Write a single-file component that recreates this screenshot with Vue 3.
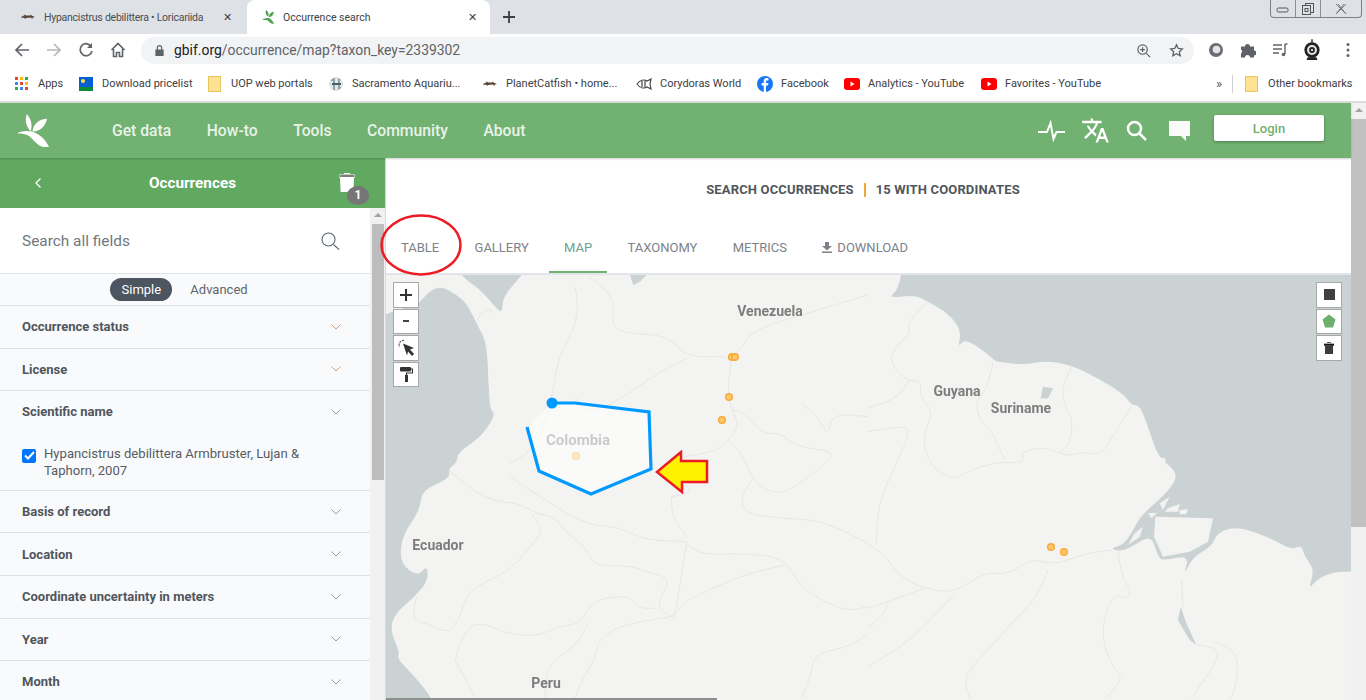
<template>
  <div class="page">
    <!-- Browser chrome -->
    <div class="tabstrip">
      <div class="tab">
        <svg class="fav" viewBox="0 0 16 16"><path d="M1 8l3-1.500 1-1 1 1 4 0 1-1 .5 1 3.500 1.500-2 .5-1 1.500-1-1.500-5 .5-1 1-1-1.500-2 .5z" fill="#5a4636"/></svg>
        <span class="tab-title squeeze">Hypancistrus debilittera • Loricariida</span>
        <span class="tab-x">✕</span>
      </div>
      <div class="tab active">
        <svg class="fav" viewBox="0 0 16 16"><path d="M5 1c-1 3 0 5 2 7 1-2 1-5-2-7zM13 3c-3 0-5 2-5 5 3 0 4-2 5-5zM1 11c3-2 5-2 7-2 2 1 4 3 5 6-4 0-5-3-7-4-2 0-3 0-5 0z" fill="#4fa04f"/></svg>
        <span class="tab-title">Occurrence search</span>
        <span class="tab-x">✕</span>
      </div>
      <svg class="newtab" viewBox="0 0 14 14"><path d="M7 1v12M1 7h12" stroke="#3c4043" stroke-width="1.800"/></svg>
      <div class="winbtns">
        <span class="win"><svg width="14" height="10" viewBox="0 0 14 10"><rect x="1" y="4" width="11" height="4" rx="1.500" fill="none" stroke="#555"/></svg></span>
        <span class="win"><svg width="14" height="14" viewBox="0 0 14 14" fill="none" stroke="#555"><rect x="4.500" y="1.500" width="8" height="9"/><rect x="1.500" y="3.500" width="8" height="9" fill="#dee1e6"/><rect x="4" y="6.500" width="3" height="3"/></svg></span>
        <span class="win wide"><svg width="14" height="12" viewBox="0 0 14 12" fill="none" stroke="#777"><path d="M2 1l10 10M12 1L2 11M4 1l8 10M10 1L2 11"/></svg></span>
      </div>
    </div>
    <div class="toolbar">
      <svg class="tb" viewBox="0 0 16 16" fill="none" stroke="#5f6368" stroke-width="1.700"><path d="M15 8H2M8 2L2 8l6 6"/></svg>
      <svg class="tb" viewBox="0 0 16 16" fill="none" stroke="#b4b7bb" stroke-width="1.700"><path d="M1 8h13M8 2l6 6-6 6"/></svg>
      <svg class="tb" viewBox="0 0 16 16" fill="none" stroke="#5f6368" stroke-width="1.700"><path d="M13.500 5A6 6 0 1 0 14 9"/><path d="M14 1v5H9" fill="#5f6368" stroke="none"/></svg>
      <svg class="tb" viewBox="0 0 16 16" fill="none" stroke="#5f6368" stroke-width="1.600"><path d="M1.500 8L8 1.500 14.500 8M3.500 7v7.500h3v-4h3v4h3V7"/></svg>
      <div class="omnibox">
        <svg class="lock" viewBox="0 0 12 14"><path d="M3 6V4a3 3 0 0 1 6 0v2h1.500v7h-9V6zM4.300 6h3.400V4a1.700 1.700 0 0 0-3.400 0z" fill="#5f6368"/></svg>
        <span class="url"><b>gbif.org</b>/occurrence/map?taxon_key=2339302</span>
        <svg class="omni-ic zoomic" viewBox="0 0 16 16" fill="none" stroke="#5f6368" stroke-width="1.300"><circle cx="7" cy="7" r="5"/><path d="M11 11l4 4M7 4.500v5M4.500 7h5"/></svg>
        <svg class="omni-ic" viewBox="0 0 16 16" fill="none" stroke="#5f6368" stroke-width="1.400"><path d="M8 1.800l1.900 4 4.300.5-3.200 3 .9 4.300L8 11.400l-3.900 2.200.9-4.300-3.200-3 4.300-.5z"/></svg>
      </div>
      <svg class="ext e1" viewBox="0 0 16 16"><circle cx="8" cy="8" r="7" fill="#6b6f73"/><circle cx="8.500" cy="7.500" r="3.800" fill="#e4e5e6"/></svg>
      <svg class="ext" viewBox="0 0 16 16"><path d="M1 4.500h4a2.500 2.500 0 0 1 5 0h4v4a2.500 2.500 0 0 1 0 5v2H10a2.500 2.500 0 0 0-5 0H1v-4a2.500 2.500 0 0 0 0-4z" fill="#5f6368"/></svg>
      <svg class="ext" viewBox="0 0 16 16" fill="none" stroke="#5f6368" stroke-width="1.400"><path d="M1 3h9M1 7h9M1 11h6M13 2v10"/><path d="M13 2h2.500"/><circle cx="11.500" cy="12.500" r="1.800" fill="#5f6368" stroke="none"/></svg>
      <svg class="ext avatar" viewBox="0 0 20 24"><path d="M10 0v4" stroke="#222" stroke-width="1.500"/><circle cx="10" cy="12" r="8.500" fill="#222"/><circle cx="10" cy="12" r="5.500" fill="#e8e8e8"/><circle cx="10" cy="12" r="3.200" fill="#222"/><circle cx="10" cy="12" r="1.200" fill="#fff"/><path d="M5 20l-1 3h12l-1-3z" fill="#222"/></svg>
      <svg class="ext dots" viewBox="0 0 4 16"><circle cx="2" cy="2.500" r="1.500" fill="#5f6368"/><circle cx="2" cy="8" r="1.500" fill="#5f6368"/><circle cx="2" cy="13.500" r="1.500" fill="#5f6368"/></svg>
    </div>
    <div class="bookmarks">
      <div v-for="b in bookmarks" :key="b.label" class="bm" :style="{ width: b.w + 'px' }">
        <svg v-if="b.icon === 'apps'" class="bm-ic small" viewBox="0 0 13 13">
          <rect v-for="(c, i) in appColors" :key="i" :x="(i % 3) * 5" :y="Math.floor(i / 3) * 5" width="3" height="3" :fill="c" />
        </svg>
        <svg v-else-if="b.icon === 'flag'" class="bm-ic" viewBox="0 0 16 16"><rect x="1" y="1" width="14" height="14" fill="#0a5fd6"/><rect x="1" y="11" width="14" height="4" fill="#0c8a3a"/><circle cx="5" cy="5" r="2" fill="#ffe23c"/></svg>
        <svg v-else-if="b.icon === 'folder'" class="bm-ic folder" viewBox="0 0 13 16"><path d="M.5.5h12v15H.5z" fill="#fde293" stroke="#e8c65c"/></svg>
        <svg v-else-if="b.icon === 'globe'" class="bm-ic" viewBox="0 0 16 16"><circle cx="8" cy="8" r="6.500" fill="#8fa3a8"/><path d="M2 5h3v8H2zM7 2h3v12H7zM12 4h2v7h-2z" fill="#dfe7e7"/><path d="M4 8h9" stroke="#46606a" stroke-width="2"/></svg>
        <svg v-else-if="b.icon === 'fish'" class="bm-ic" viewBox="0 0 16 16"><path d="M1 8l3-1.500 1-1 1 1 4 0 1-1 .5 1 3.500 1.500-2 .5-1 1.500-1-1.500-5 .5-1 1-1-1.500-2 .5z" fill="#5a4636"/></svg>
        <svg v-else-if="b.icon === 'cory'" class="bm-ic" viewBox="0 0 16 16" fill="none" stroke="#444" stroke-width="1.200"><path d="M1 8c3-4 7-5 10-3l4-2-1 5 1 5-4-2c-3 2-7 1-10-3zM6 5v6M9 5v6"/></svg>
        <svg v-else-if="b.icon === 'fb'" class="bm-ic" viewBox="0 0 16 16"><circle cx="8" cy="8" r="8" fill="#1877f2"/><path d="M9 16V9.500h2l.4-2.400H9V5.600c0-.7.300-1.200 1.300-1.200h1.200V2.300c-.5-.1-1.200-.2-1.900-.2C8 2.100 6.700 3.300 6.700 5.400v1.700H4.600v2.400h2.100V16z" fill="#fff"/></svg>
        <svg v-else class="bm-ic" viewBox="0 0 16 16"><rect y="2" width="16" height="12" rx="3" fill="#f00"/><path d="M6.500 5.500v5l4-2.500z" fill="#fff"/></svg>
        <span class="bm-label">{{ b.label }}</span>
      </div>
      <span class="bm-more">»</span>
      <span class="bm-sep"></span>
      <svg class="bm-ic folder" viewBox="0 0 13 16"><path d="M.5.5h12v15H.5z" fill="#fde293" stroke="#e8c65c"/></svg>
      <span class="bm-label other">Other bookmarks</span>
    </div>

    <!-- Site -->
    <div class="site">
      <div class="site-main">
        <header class="topbar">
          <svg class="logo" viewBox="0 0 34 34"><path d="M10 0c-2 7-1 12 4 18 2-6 1-13-4-18zM31 5c-8 0-14 5-15 13 8 0 13-5 15-13zM0 20c5-3 10-3 15-2 7 2 14 7 18 16-5 1-10-1-14-5-3-3-6-7-10-8-3-1-6-1-9-1z" fill="#fff"/></svg>
          <nav class="mainnav">
            <a v-for="n in navItems" :key="n">{{ n }}</a>
          </nav>
          <div class="top-right">
            <svg class="ti pulse" viewBox="0 0 27 20" fill="none" stroke="#fff" stroke-width="2"><path d="M0 11h9l3.500-9 3 16 3-7h8.500"/></svg>
            <svg class="ti lang" viewBox="0 0 24 24" fill="#fff"><path d="M12.900 15.100l-2.600-2.500c1.800-2 3-4.200 3.800-6.600H17V4h-7V2H8v2H1v2h11.200c-.7 1.900-1.700 3.700-3.200 5.400-.9-1-1.700-2.200-2.300-3.400h-2c.7 1.600 1.700 3.200 3 4.600l-5.100 5L4 19l5-5 3.100 3.100zM18.500 10h-2L12 22h2l1.100-3h4.800l1.100 3h2zm-2.600 7l1.600-4.300 1.600 4.300z"/></svg>
            <svg class="ti srch" viewBox="0 0 21 21" fill="none" stroke="#fff" stroke-width="2.500"><circle cx="8.500" cy="8.500" r="6.500"/><path d="M13.500 13.500l6.500 6.500"/></svg>
            <svg class="ti chat" viewBox="0 0 21 20"><path d="M0 0h21v15h-4v5l-5-5H0z" fill="#fafafa"/></svg>
            <button class="login">Login</button>
          </div>
        </header>

        <div class="content">
          <aside class="sidebar">
            <div class="side-head">
              <span class="back">
                <svg width="8" height="12" viewBox="0 0 8 12" fill="none" stroke="#fff" stroke-width="1.300"><path d="M6.500 1.500L2 6l4.500 4.500"/></svg>
              </span>
              <span class="side-title">Occurrences</span>
              <span class="bin">
                <svg width="16" height="20" viewBox="0 0 16 20"><path d="M5 1.500h6M0 3h16v2H0z" stroke="#fff"/><path d="M1 5h14l-.6 15H1.600z" fill="#fff"/></svg>
                <span class="badge">1</span>
              </span>
            </div>
            <div class="side-scroll">
              <div class="side-body">
                <div class="search-row">
                  <span class="search-ph">Search all fields</span>
                  <svg width="19" height="18" viewBox="0 0 19 18" fill="none" stroke="#5d6670" stroke-width="1.100"><circle cx="7.500" cy="7.500" r="6.500"/><path d="M12.500 12.500l5.500 5"/></svg>
                </div>
                <div class="mode-row">
                  <span class="pill">Simple</span>
                  <span class="mode-alt">Advanced</span>
                </div>
                <div v-for="f in filters" :key="f.name" class="filter" :class="{ open: f.value }">
                  <div class="filter-head">
                    <span class="filter-name">{{ f.name }}</span>
                    <svg class="chev" :class="{ warm: f.warm }" viewBox="0 0 10 6" fill="none" stroke="currentColor"><path d="M.5.500L5 5 9.500.5"/></svg>
                  </div>
                  <label v-if="f.value" class="check">
                    <span class="box">
                      <svg width="11" height="9" viewBox="0 0 11 9" fill="none" stroke="#fff" stroke-width="2"><path d="M1 4.500l3 3 6-6.500"/></svg>
                    </span>
                    <span>{{ f.value }}</span>
                  </label>
                </div>
              </div>
              <div class="v-bar">
                <span class="arrow"></span>
                <span class="v-thumb"></span>
              </div>
            </div>
          </aside>

          <main class="main">
            <div class="summary">
              <span>SEARCH OCCURRENCES</span><span class="summary-sep"></span><span>15 WITH COORDINATES</span>
            </div>
            <div class="tabs">
              <a v-for="t in tabs" :key="t" class="tab-link" :class="{ on: t === 'MAP' }">
                <svg v-if="t === 'DOWNLOAD'" width="10" height="11" viewBox="0 0 10 11"><path d="M3 0h4v4h3L5 8.500 0 4h3zM0 9.500h10V11H0z" fill="#7d8288"/></svg>
                {{ t }}
              </a>
            </div>
            <div class="map">
              <svg class="map-svg" viewBox="386 275 965 425">
                <rect x="386" y="274" width="965" height="426" fill="#f3f3f1" />
                <g transform="translate(385,270) scale(.33333)">
                  <path fill="#cad2d3" :d="seaLeft" />
                  <path fill="#cad2d3" d="M735 15H785L765 35 745 45z" />
                  <path v-for="(d, i) in bordersLeft" :key="i" :d="d" class="border-line" />
                </g>
                <g transform="translate(868,270) scale(.33333)">
                  <path fill="#cad2d3" :d="seaRight" />
                  <path fill="#f3f3f1" d="M862 740 1035 745 1020 815 965 845 885 860 858 800zM800 790 825 770 815 800 780 825zM875 700 905 680 885 720zM900 715 935 702 930 725 890 725zM840 730 868 728 850 745zM935 720 960 718 955 732 935 733z" />
                  <path fill="#cad2d3" d="M525 350 555 355 540 385 518 385zM938 1010 955 1060 985 1125 965 1110 930 1050z" />
                  <circle cx="885" cy="571" r="8" fill="#f3f3f1" />
                  <path v-for="(d, i) in bordersRight" :key="i" :d="d" class="border-line" />
                </g>
                <g class="map-label">
                  <text x="770" y="316">Venezuela</text>
                  <text x="957" y="396">Guyana</text>
                  <text x="1021" y="413">Suriname</text>
                  <text x="438" y="550">Ecuador</text>
                  <text x="546" y="688">Peru</text>
                  <text x="578" y="445" class="big">Colombia</text>
                </g>
                <circle v-for="(p, i) in points" :key="i" :cx="p[0]" :cy="p[1]" r="3.300" class="point" />
                <!-- polygon being drawn -->
                <path d="M552 403 575 403 649 412 651 469 591 494 539 471 527 427z" fill="#fff" fill-opacity=".6" />
                <path d="M552 403 575 403 649 412 651 469 591 494 539 471 527 427" fill="none" stroke="#0099ff" stroke-width="3.200" />
                <circle cx="552" cy="403" r="5.500" fill="#0099ff" />
              </svg>

              <div class="ctrls left">
                <button class="ctrl"><svg width="14" height="14" viewBox="0 0 14 14"><path d="M7 1v12M1 7h12" stroke="#333" stroke-width="2"/></svg></button>
                <button class="ctrl"><svg width="8" height="4" viewBox="0 0 8 4"><path d="M1 2h6" stroke="#444" stroke-width="2"/></svg></button>
                <button class="ctrl"><svg width="18" height="18" viewBox="0 0 18 18"><path d="M6 4.500l11 4.500-4 1.500 4 4.500-2 2-4-4.500-1 4z" fill="#333"/><path d="M7 1.500A4.500 4.500 0 0 0 2.500 8" fill="none" stroke="#555" stroke-width="1.200" stroke-dasharray="2 1"/></svg></button>
                <button class="ctrl"><svg width="13" height="15" viewBox="0 0 13 15"><rect x="0" y="0" width="11" height="4.500" rx="1" fill="#333"/><path d="M11 2h1.500v4H6.500v3" fill="none" stroke="#333" stroke-width="1.200"/><rect x="5" y="8" width="3" height="7" fill="#333"/></svg></button>
              </div>
              <div class="ctrls right">
                <button class="ctrl"><span class="sq"></span></button>
                <button class="ctrl"><svg width="14" height="14" viewBox="0 0 14 14"><path d="M7 .5l6.500 5-2.500 8H3l-2.500-8z" fill="#6db06d"/></svg></button>
                <button class="ctrl"><svg width="10" height="12" viewBox="0 0 10 12"><path d="M3 .5h4M0 2h10v1.500H0z" stroke="#333" stroke-width=".8"/><path d="M1 4h8v8H1z" fill="#3c3c3c"/></svg></button>
              </div>
              <div class="h-thumb"></div>
            </div>
          </main>
        </div>
      </div>
      <div class="page-bar">
        <span class="arrow"></span>
        <span class="page-thumb"></span>
      </div>
    </div>

    <!-- Annotations drawn on the screenshot -->
    <svg class="note circle-note" viewBox="0 0 84 64"><ellipse cx="41" cy="32" rx="39.500" ry="29.500" fill="none" stroke="#ed1c24" stroke-width="2.500"/></svg>
    <svg class="note arrow-note" viewBox="0 0 54 44"><path d="M2 22 26 2V11H52V32H27V42z" fill="#fff200" stroke="#ed1c24" stroke-width="2.500"/></svg>
  </div>
</template>

<script setup>
const bookmarks = [
  { label: 'Apps', icon: 'apps', w: 63 },
  { label: 'Download pricelist', icon: 'flag', w: 130 },
  { label: 'UOP web portals', icon: 'folder', w: 120 },
  { label: 'Sacramento Aquariu...', icon: 'globe', w: 154 },
  { label: 'PlanetCatfish • home...', icon: 'fish', w: 154 },
  { label: 'Corydoras World', icon: 'cory', w: 121 },
  { label: 'Facebook', icon: 'fb', w: 87 },
  { label: 'Analytics - YouTube', icon: 'yt', w: 137 },
  { label: 'Favorites - YouTube', icon: 'yt', w: 137 },
]

const appColors = ['#ea4335', '#fbbc05', '#34a853', '#4285f4', '#ea4335', '#fbbc05', '#34a853', '#4285f4', '#ea4335']

const navItems = ['Get data', 'How-to', 'Tools', 'Community', 'About']

const tabs = ['TABLE', 'GALLERY', 'MAP', 'TAXONOMY', 'METRICS', 'DOWNLOAD']

const filters = [
  { name: 'Occurrence status', warm: true },
  { name: 'License', warm: true },
  { name: 'Scientific name', value: 'Hypancistrus debilittera Armbruster, Lujan & Taphorn, 2007' },
  { name: 'Basis of record' },
  { name: 'Location' },
  { name: 'Coordinate uncertainty in meters' },
  { name: 'Year' },
  { name: 'Month' },
]

const points = [
  [732, 357], [735, 357], [729, 397], [722, 420], [576, 456], [1051, 547], [1064, 552],
]

// rounds the corners of a traced polyline: "x y x y ..." becomes quadratic curves
function smooth(line, closed) {
  const n = line.trim().split(/\s+/).map(Number)
  const pts = []
  for (let i = 0; i < n.length; i += 2) pts.push([n[i], n[i + 1]])
  let d = `M${pts[0][0]} ${pts[0][1]}`
  for (let i = 1; i < pts.length - 1; i++) {
    const mx = (pts[i][0] + pts[i + 1][0]) / 2
    const my = (pts[i][1] + pts[i + 1][1]) / 2
    d += `Q${pts[i][0]} ${pts[i][1]} ${mx} ${my}`
  }
  const last = pts[pts.length - 1]
  d += `L${last[0]} ${last[1]}`
  return closed ? d + 'z' : d
}

// map coastlines and borders, traced at 3x from the left and right half of the map
const seaLeft = [
  smooth('215 -20 225 18 285 57 336 117 351 128 354 81 405 21 440 -20', true),
  smooth('-40 150 30 120 100 105 130 65 170 48 215 75 245 100 280 170 305 220 310 330 315 420 332 432 290 500 220 545 215 580 190 595 195 625 110 660 105 720 50 800 45 880 100 920 125 885 130 930 90 980 30 1030 15 1080 45 1150 35 1165 90 1220 145 1290 150 1340 -40 1340', true),
].join('')
const seaRight = smooth('105 -20 95 55 60 85 140 75 180 95 240 130 280 180 270 235 290 205 350 245 378 270 385 275 470 285 530 272 610 285 700 330 770 375 790 405 815 405 840 470 870 560 920 600 925 630 885 680 820 735 790 790 765 825 725 835 760 845 800 825 850 795 870 860 885 872 965 855 945 920 975 860 1030 830 1050 785 1110 770 1200 800 1270 840 1300 825 1310 860 1340 900 1320 960 1350 925 1400 905 1449 905 1520 905 1520 -20', true)

const bordersLeft = [
  '610 20 660 50 690 110 680 160 710 190 850 195 905 265 1045 255 1030 320 1030 400 1065 465 1030 510 990 545 900 560 860 570',
  '905 265 850 290 760 350 700 390 640 420 590 415 570 380',
  '570 50 580 100 570 170 520 260 500 390 470 490 430 550 375 580',
  '375 620 420 650 510 710 610 765 700 770 780 810 905 815',
  '190 600 260 660 330 695 400 700 450 730 510 740 545 790 600 830 630 890 730 885 800 910 860 925 810 1010 860 1040',
  '440 730 470 770 460 800 380 900 270 950 240 990 220 1050 190 1090 140 1065 80 1050 95 980',
  '860 1040 790 1050 700 1070 640 1110 630 1170 590 1230 570 1285',
  '905 815 870 1045 860 1040',
  '905 820 940 855 1050 850 1200 860 1250 960 1380 1025 1449 1010',
  '860 680 855 730 905 800',
  '860 680 925 670 900 640 890 660',
  '1030 510 1075 550 1100 630 1150 665 1200 670 1300 600 1360 545 1230 530 1190 490 1130 490 1080 430 1040 420',
  '1100 630 1065 680 1080 730 1180 745 1310 750 1449 820',
  '1250 400 1300 440 1330 500 1340 430 1449 440',
  '1449 75 1300 120 1100 180 1075 230 1045 255',
  '910 990 860 1040',
  '910 990 1050 920 1200 885',
  '210 1170 240 1070 300 1060 360 1090 450 1100 520 1070 590 1060 620 990 730 975 760 1015 810 1015',
  '210 1170 270 1285',
  '480 1285 475 1190 570 1130 610 1060',
  '1449 1090 1400 1130 1290 1150 1280 1210 1250 1285',
  '270 160 300 110 330 130',
].map((l) => smooth(l))

const bordersRight = [
  '180 95 115 155 130 190 80 230 65 280 120 335 160 330 155 380 195 425 175 470 165 520 190 590 250 630 300 605 380 575 470 580 460 545 530 530 600 560 640 545 700 555 740 490 790 410',
  '120 335 100 380 0 415',
  '375 275 365 340 320 400 340 460 370 480 410 570',
  '610 290 580 350 590 410 615 450 605 520 575 550',
  '0 485 110 465 125 490 90 570 30 700 25 820',
  '0 825 40 840 100 925 170 955 260 970 350 905 420 915 490 865 560 885 650 850 730 840',
  '170 955 60 995 0 1015',
  '60 1000 50 1030 0 1075',
  '260 970 180 1060 100 1130 0 1190',
  '540 900 510 980 430 1060 350 1150 285 1220 305 1285',
  '750 845 760 920 790 960 775 990 750 970 715 1010 700 1110 740 1200 765 1225 715 1285',
  '940 930 945 1010',
  '990 1125 1045 1130 1050 1170 970 1285',
  '1040 1115 1105 1135 1110 1220 1090 1285',
].map((l) => smooth(l))
</script>

<style>
html, body {
  margin: 0;
  overflow: hidden;
}
</style>

<style scoped>
.page {
  position: relative;
  width: 1366px;
  height: 700px;
  overflow: hidden;
  display: flex;
  flex-direction: column;
  font-family: Roboto, "Liberation Sans", sans-serif;
  background: #fff;
}

/* Browser tab strip */
.tabstrip {
  height: 34px;
  flex: none;
  display: flex;
  background: #dee1e6;
  position: relative;
}
.tab {
  width: 240px;
  padding: 0 8px 0 20px;
  display: flex;
  align-items: center;
  box-sizing: border-box;
  font-size: 10.500px;
  color: #4a4d51;
}
.tab.active {
  width: 243px;
  margin-left: 7px;
  padding: 0 13px 0 14px;
  background: #fff;
  border-radius: 8px 8px 0 0;
  color: #3c4043;
}
.fav {
  width: 16px;
  height: 16px;
  margin-right: 8px;
  flex: none;
}
.active .fav {
  margin-right: 6px;
}
.tab-title {
  flex: 1;
  white-space: nowrap;
}
.squeeze {
  letter-spacing: -.25px;
}
.tab-x {
  font-size: 11px;
  color: #3c4043;
}
.newtab {
  width: 14px;
  height: 14px;
  margin: 10px 0 0 12px;
}
.winbtns {
  position: absolute;
  top: 0;
  right: 4px;
  display: flex;
  height: 17px;
  border: 1px solid #7c7f83;
  border-top: none;
  border-radius: 0 0 4px 4px;
}
.win {
  width: 24px;
  display: flex;
  align-items: center;
  justify-content: center;
  border-right: 1px solid #8b8e92;
}
.win.wide {
  width: 40px;
  border-right: none;
}

/* Browser toolbar */
.toolbar {
  height: 32px;
  flex: none;
  display: flex;
  align-items: center;
  padding-left: 14px;
  box-sizing: border-box;
}
.tb {
  width: 16px;
  height: 16px;
  margin-right: 16px;
  flex: none;
}
.omnibox {
  width: 1053px;
  height: 27px;
  margin: 0 0 0 -1px;
  flex: none;
  display: flex;
  align-items: center;
  border-radius: 14px;
  background: #f1f3f4;
  padding: 0 10px 0 13px;
  box-sizing: border-box;
}
.lock {
  width: 11px;
  height: 13px;
  margin-right: 9px;
}
.url {
  flex: 1;
  font-size: 13.900px;
  color: #5f6368;
}
.url b {
  font-weight: 400;
  color: #202124;
}
.omni-ic {
  width: 15px;
  height: 15px;
}
.zoomic {
  margin-right: 18px;
}
.ext {
  width: 16px;
  height: 16px;
  margin-left: 16px;
  flex: none;
}
.e1 {
  margin-left: 14px;
}
.avatar {
  width: 18px;
  height: 22px;
  margin-left: 15px;
}
.dots {
  width: 4px;
  height: 16px;
  margin-left: 25px;
}

/* Bookmarks */
.bookmarks {
  height: 37px;
  flex: none;
  display: flex;
  align-items: center;
  padding: 0 0 0 15px;
  box-sizing: border-box;
  font-size: 11px;
  color: #3c4043;
  border-bottom: 2px solid #dcdcdc;
}
.bm {
  display: flex;
  align-items: center;
  flex: none;
  white-space: nowrap;
}
.bm-ic {
  width: 16px;
  height: 16px;
  margin-right: 8px;
  flex: none;
}
.bm-ic.small {
  width: 13px;
  height: 13px;
  margin-right: 10px;
}
.bm-ic.folder {
  width: 13px;
  margin-right: 10px;
}
.bm-more {
  margin-left: 98px;
  font-size: 13px;
  color: #555;
}
.bm-sep {
  width: 1px;
  height: 18px;
  background: #cfd1d4;
  margin: 0 12px 0 10px;
}
.other {
  white-space: nowrap;
}

/* Site layout */
.site {
  flex: 1;
  min-height: 0;
  display: flex;
}
.site-main {
  flex: 1;
  min-width: 0;
  display: flex;
  flex-direction: column;
}
.page-bar {
  width: 15px;
  flex: none;
  background: #f1f1f1;
  display: flex;
  flex-direction: column;
  align-items: center;
}
.arrow {
  width: 0;
  height: 0;
  margin: 5px 0 4px;
  border-left: 4px solid transparent;
  border-right: 4px solid transparent;
  border-bottom: 4px solid #a3a3a3;
}
.page-thumb {
  width: 15px;
  height: 408px;
  margin-top: 3px;
  background: #c1c1c1;
}

.topbar {
  height: 55px;
  flex: none;
  display: flex;
  align-items: center;
  background: #71b171;
  box-shadow: 0 1px 2px rgba(0, 0, 0, .2);
  position: relative;
  z-index: 2;
}
.logo {
  width: 33px;
  height: 33px;
  margin: 0 62px 0 17px;
  flex: none;
}
.mainnav {
  display: flex;
  gap: 35.500px;
  font-size: 15.700px;
  font-weight: 500;
  color: #e8f3e8;
}
.top-right {
  margin-left: auto;
  display: flex;
  align-items: center;
  padding-right: 27px;
}
.ti {
  flex: none;
}
.pulse {
  width: 27px;
  height: 22px;
  margin-right: 16px;
}
.lang {
  width: 29px;
  height: 29px;
  margin-right: 16px;
}
.srch {
  width: 21px;
  height: 21px;
  margin-right: 22px;
}
.chat {
  width: 21px;
  height: 20px;
  margin-right: 24px;
}
.login {
  width: 110px;
  height: 26px;
  margin-bottom: 5px;
  border: none;
  border-radius: 2px;
  background: #fff;
  color: #71b171;
  font: 500 13px Roboto, sans-serif;
  box-shadow: 0 1px 3px rgba(0, 0, 0, .3);
}

.content {
  flex: 1;
  min-height: 0;
  display: flex;
}

/* Left filter drawer */
.sidebar {
  width: 385px;
  flex: none;
  display: flex;
  flex-direction: column;
  border-right: 1px solid #d9d9d9;
  box-sizing: content-box;
}
.side-head {
  height: 50px;
  flex: none;
  display: flex;
  align-items: center;
  justify-content: center;
  position: relative;
  background: #61a861;
}
.back {
  position: absolute;
  left: 34px;
  top: 16px;
}
.side-title {
  font-size: 15.300px;
  font-weight: 700;
  color: #fff;
}
.bin {
  position: absolute;
  left: 339px;
  top: 14px;
}
.badge {
  position: absolute;
  left: 8px;
  top: 14px;
  width: 22px;
  height: 19px;
  border-radius: 50%;
  background: #767676;
  color: #fff;
  font-size: 12px;
  font-weight: 700;
  text-align: center;
  line-height: 19px;
}
.side-scroll {
  flex: 1;
  min-height: 0;
  display: flex;
}
.side-body {
  flex: 1;
  min-width: 0;
  overflow: hidden;
  background: #f9fafc;
}
.v-bar {
  width: 15px;
  flex: none;
  background: #f1f1f1;
  display: flex;
  flex-direction: column;
  align-items: center;
}
.v-thumb {
  width: 12px;
  height: 256px;
  margin-top: 3px;
  background: #bdbdbd;
}
.search-row {
  height: 65px;
  display: flex;
  align-items: center;
  justify-content: space-between;
  padding: 0 30px 0 22px;
  background: #fff;
  border-bottom: 1px solid #dde3e7;
}
.search-ph {
  font-size: 15.400px;
  color: #72777d;
}
.mode-row {
  height: 31px;
  display: flex;
  align-items: center;
  justify-content: center;
  gap: 18px;
  padding-right: 12px;
  font-size: 13px;
  border-bottom: 1px solid #dde3e7;
}
.pill {
  width: 62px;
  height: 23px;
  line-height: 23px;
  text-align: center;
  border-radius: 12px;
  background: #4c5560;
  color: #fff;
}
.mode-alt {
  color: #5f666d;
}
.filter {
  border-bottom: 1px solid #dde3e7;
}
.filter-head {
  height: 41.600px;
  display: flex;
  align-items: center;
  justify-content: space-between;
  padding: 0 29px 0 22px;
}
.filter-name {
  font-size: 13px;
  font-weight: 700;
  color: #50565c;
}
.chev {
  width: 10px;
  height: 6px;
  color: #8aa0b0;
}
.chev.warm {
  color: #d99b72;
}
.check {
  display: flex;
  gap: 8px;
  padding: 12px 30px 0 22px;
  height: 45px;
  font-size: 13.100px;
  line-height: 17.500px;
  color: #565c63;
}
.box {
  width: 14px;
  height: 14px;
  margin-top: 4px;
  flex: none;
  border-radius: 2px;
  background: #0075ff;
  display: flex;
  align-items: center;
  justify-content: center;
}

/* Main column */
.main {
  flex: 1;
  min-width: 0;
  display: flex;
  flex-direction: column;
}
.summary {
  height: 63px;
  flex: none;
  display: flex;
  align-items: center;
  justify-content: center;
  padding-right: 11px;
  font-size: 13px;
  letter-spacing: .15px;
  font-weight: 700;
  color: #50565c;
}
.summary-sep {
  width: 2px;
  height: 14px;
  margin: 0 10px;
  background: #f0a63a;
}
.tabs {
  height: 54px;
  flex: none;
  display: flex;
  gap: 5.300px;
  border-bottom: 2px solid #e1e4e8;
  box-sizing: border-box;
}
.tab-link {
  padding: 2px 15px 0;
  display: flex;
  align-items: center;
  gap: 5px;
  font-size: 13px;
  color: #7d8288;
  border-bottom: 2px solid transparent;
}
.tab-link.on {
  border-bottom-color: #71b171;
  color: #6f9f8f;
}
.map {
  flex: 1;
  min-height: 0;
  position: relative;
  overflow: hidden;
}
.map-svg {
  display: block;
  width: 965px;
  height: 425px;
  filter: blur(.3px);
}
.border-line {
  fill: none;
  stroke: #e6e6e4;
  stroke-width: 3;
  stroke-linejoin: round;
}
.map-label text {
  font-family: Roboto, sans-serif;
  font-size: 14px;
  font-weight: 700;
  fill: #7d7d7d;
  text-anchor: middle;
}
.map-label text.big {
  font-size: 15px;
}
.point {
  fill: #ffc766;
  stroke: #f9a93a;
  stroke-width: 1.500;
}
.ctrls {
  position: absolute;
  top: 7px;
  display: flex;
  flex-direction: column;
  gap: 1px;
}
.ctrls.left {
  left: 7px;
}
.ctrls.right {
  right: 9px;
}
.ctrl {
  width: 26px;
  height: 25.600px;
  padding: 0;
  display: flex;
  align-items: center;
  justify-content: center;
  background: #fff;
  border: 1px solid #a8a8a8;
}
.sq {
  width: 11px;
  height: 11px;
  background: #404040;
}
.h-thumb {
  position: absolute;
  left: 0;
  bottom: 0;
  width: 331px;
  height: 2px;
  background: #8e8e8e;
}

/* Hand-drawn marks over the page */
.note {
  position: absolute;
}
.circle-note {
  left: 380px;
  top: 213px;
  width: 84px;
  height: 64px;
}
.arrow-note {
  left: 655px;
  top: 450px;
  width: 54px;
  height: 44px;
}
</style>
